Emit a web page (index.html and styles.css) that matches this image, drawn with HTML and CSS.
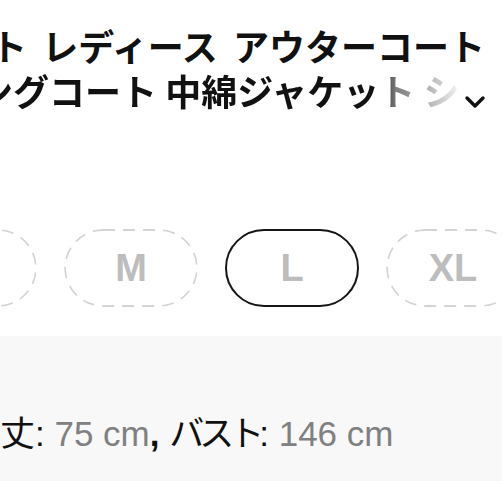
FILE: index.html
```html
<!DOCTYPE html>
<html lang="ja">

<head>
    <meta charset="UTF-8">
    <meta name="viewport" content="width=device-width, initial-scale=1.0">
    <title>商品詳細</title>
    <link rel="stylesheet" href="styles.css">
</head>

<body>
    <div class="page">
        <div class="title">
            <div class="title-line title-first">ト レディース アウターコート</div>
            <div class="title-line title-row">
                <span class="title-fade">ングコート 中綿ジャケット シンプル</span>
                <svg class="chevron" width="22" height="14" viewBox="0 0 22 14">
                    <path d="M3 3 L11 11 L19 3" fill="none" stroke="#111" stroke-width="3.4" stroke-linecap="round" stroke-linejoin="round"/>
                </svg>
            </div>
        </div>

        <div class="sizes">
            <div class="size">S</div>
            <div class="size">M</div>
            <div class="size size-active">L</div>
            <div class="size">XL</div>
        </div>

        <div class="spec">
            <p class="spec-text">丈: <span class="value">75 cm</span><span class="sep">, </span><span class="jp">バスト</span>: <span class="value">146 cm</span></p>
        </div>
    </div>
</body>

</html>
```

FILE: styles.css
```css
body {
    margin: 0;
    background-color: white;
    color: #111;
    font-family: 'Liberation Sans', 'Noto Sans CJK JP', sans-serif;
    overflow: hidden;
}

.page {
    width: 502px;
    height: 502px;
    overflow: hidden;
}

.title {
    padding-top: 23px;
    font-family: 'Noto Sans CJK JP', sans-serif;
    font-size: 36px;
    font-weight: 700;
    line-height: 45px;
    white-space: nowrap;
}

.title-first {
    margin-left: -9px;
    word-spacing: 7px;
}

.title-row {
    display: flex;
    align-items: center;
    margin-left: -23px;
}

.title-fade {
    flex: none;
    width: 487px;
    overflow: hidden;
    -webkit-mask-image: linear-gradient(to right, #000 401px, rgba(0, 0, 0, 0.55) 419px, rgba(0, 0, 0, 0.2) 466px, transparent 487px);
    mask-image: linear-gradient(to right, #000 401px, rgba(0, 0, 0, 0.55) 419px, rgba(0, 0, 0, 0.2) 466px, transparent 487px);
}

.chevron {
    flex: none;
    margin-top: 22px;
}

.sizes {
    display: flex;
    gap: 27px;
    margin-top: 116px;
    margin-left: -97px;
}

.size {
    flex: none;
    box-sizing: border-box;
    width: 134px;
    height: 78px;
    border-radius: 39px;
    background-image: url("data:image/svg+xml,%3Csvg xmlns='http://www.w3.org/2000/svg' width='134' height='78'%3E%3Crect x='1' y='1' width='132' height='76' rx='38' fill='none' stroke='%23d4d4d4' stroke-width='1.8' stroke-dasharray='12 8'/%3E%3C/svg%3E");
    display: flex;
    align-items: center;
    justify-content: center;
    font-size: 38px;
    font-weight: 700;
    color: #bdbdbd;
}

.size-active {
    background-image: none;
    border: 2.5px solid #161616;
}

.spec {
    margin-top: 29px;
    height: 145px;
    background-color: #f8f8f8;
    box-sizing: border-box;
    padding-top: 78px;
}

.spec-text {
    margin: 0;
    font-size: 35px;
    line-height: 40px;
    white-space: nowrap;
    color: #111;
}

.sep {
    font-weight: 700;
}

.jp {
    letter-spacing: -5px;
}

.value {
    color: #808080;
}
```
